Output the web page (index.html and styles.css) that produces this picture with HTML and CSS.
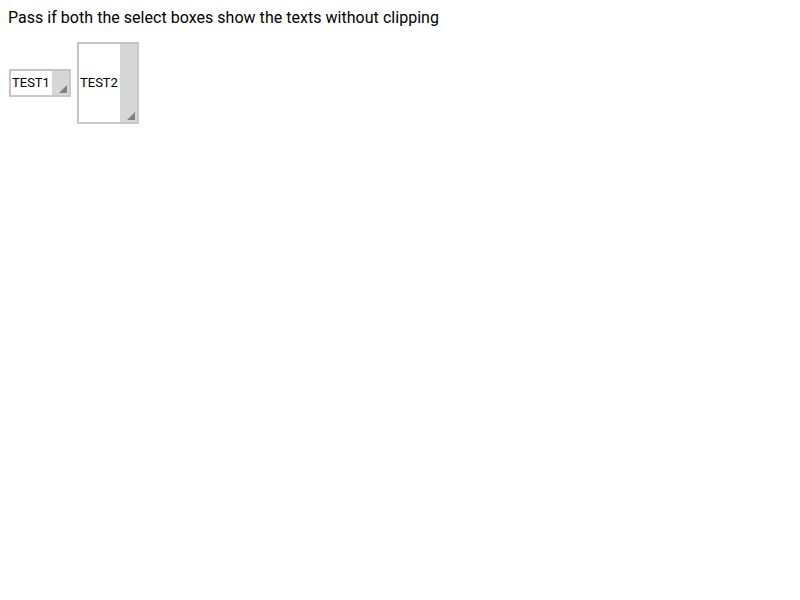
FILE: index.html
```html
<!DOCTYPE html>
<html>
<head>
<meta charset="utf-8">
<link rel="stylesheet" href="styles.css">
</head>
<body>
<div class="title">Pass if both the select boxes show the texts without clipping</div>
<div class="row">
  <div class="sel sel-small">
    <span class="val">TEST1</span>
    <span class="bar"><span class="grip"></span></span>
  </div>
  <div class="sel sel-tall">
    <span class="val">TEST2</span>
    <span class="bar"><span class="grip"></span></span>
  </div>
</div>
</body>
</html>
```
FILE: styles.css
```css
body {
  margin: 8px;
  font-family: Roboto, "Liberation Sans", sans-serif;
  font-size: 16px;
  color: #000;
  background: #fff;
}
.title {
  line-height: 19px;
  letter-spacing: 0.03px;
}
.row {
  display: flex;
  align-items: center;
  gap: 6px;
  margin-top: 15px;
  margin-left: 1px;
}
.sel {
  display: flex;
  align-items: stretch;
  border: 2px solid #c8c8c8;
  border-top-color: #c4c4c4;
  border-left-color: #c4c4c4;
  background: #fff;
  font-size: 13px;
  box-sizing: border-box;
}
.sel-small {
  width: 62px;
  height: 28px;
}
.sel-tall {
  width: 62px;
  height: 82px;
}
.val {
  flex: 1;
  display: flex;
  align-items: center;
  padding-left: 1px;
  padding-bottom: 1px;
  white-space: nowrap;
  overflow: hidden;
}
.bar {
  width: 17px;
  background: #d6d6d6;
  position: relative;
}
.grip {
  position: absolute;
  right: 2px;
  bottom: 2px;
  width: 0;
  height: 0;
  border-left: 8px solid transparent;
  border-bottom: 8px solid #808080;
}
```
